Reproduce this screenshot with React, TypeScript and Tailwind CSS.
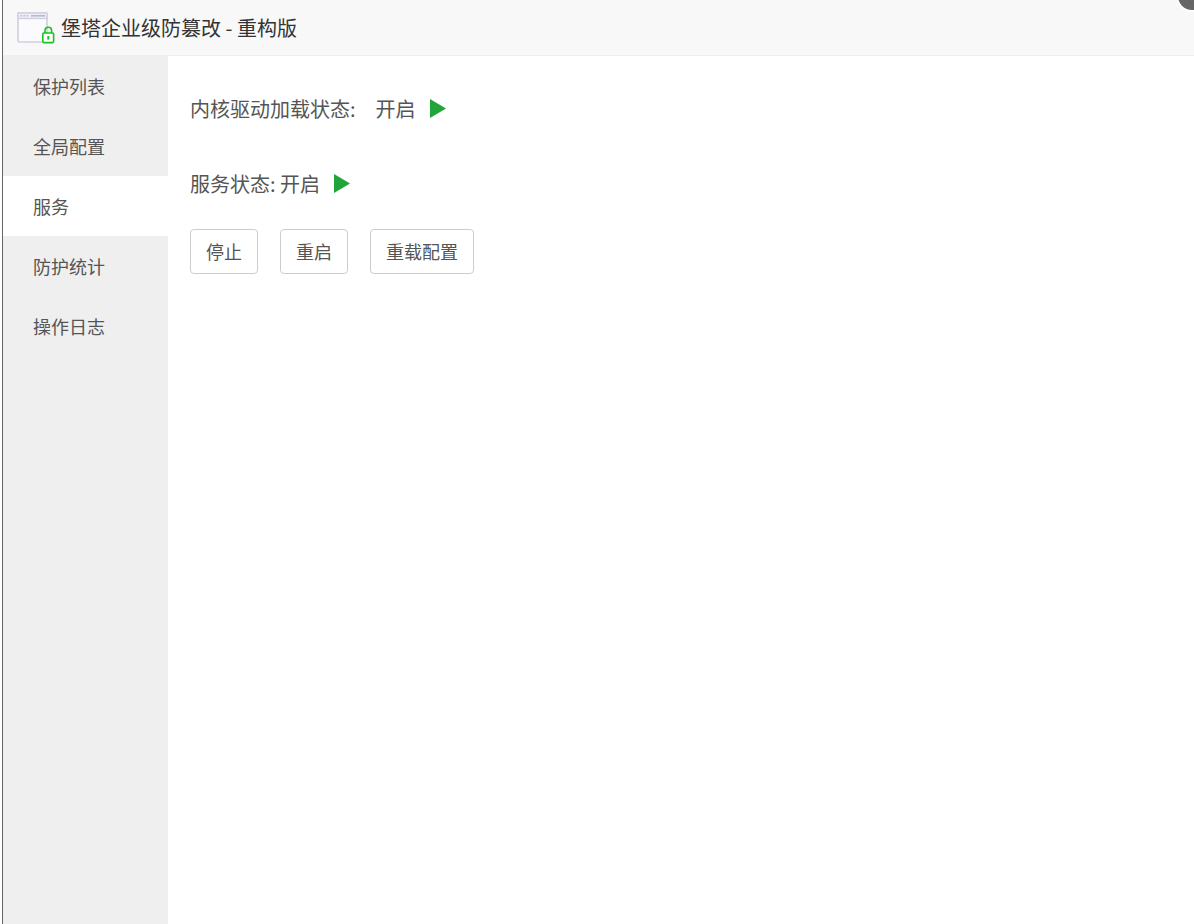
import React from "react";

const font = { fontFamily: '"Microsoft YaHei","Noto Sans CJK SC","Liberation Sans",sans-serif' };

const nav = ["保护列表", "全局配置", "服务", "防护统计", "操作日志"];

function Logo() {
  return (
    <svg width="38" height="32" viewBox="0 0 38 32" fill="none" className="shrink-0">
      <rect x="1" y="1" width="29" height="29" rx="2" fill="#fbfbfd" stroke="#cfcfe0" strokeWidth="1.6" />
      <rect x="1" y="1" width="29" height="5.5" fill="#eeeef5" stroke="#cfcfe0" strokeWidth="1.4" />
      <rect x="3.5" y="3" width="1.5" height="1.5" fill="#b9b9ce" />
      <rect x="6.5" y="3" width="1.5" height="1.5" fill="#b9b9ce" />
      <rect x="9.5" y="3" width="1.5" height="1.5" fill="#b9b9ce" />
      <rect x="14" y="3" width="14" height="1.6" fill="#b9b9ce" />
      <path d="M28 21v-2.5a3.3 3.3 0 0 1 6.6 0V21" stroke="#17c41f" strokeWidth="1.6" />
      <rect x="25.8" y="21" width="10.8" height="9.6" rx="1" fill="#fff" stroke="#17c41f" strokeWidth="1.6" />
      <rect x="30.3" y="24" width="2" height="3.6" fill="#17c41f" />
    </svg>
  );
}

function Play() {
  return (
    <svg width="16" height="19" viewBox="0 0 16 19" className="shrink-0">
      <polygon points="0,0 16,9.5 0,19" fill="#20a53a" />
    </svg>
  );
}

export default function App() {
  return (
    <div className="relative flex h-[924px] w-[1194px] flex-col overflow-hidden bg-white pl-[2px] text-[#555]" style={font}>
      <div className="flex h-full flex-col border-l border-[#666]">
        <header className="flex h-[56px] shrink-0 items-center gap-[6px] border-b border-[#eee] bg-[#f8f8f8] pl-[14px]">
          <Logo />
          <span className="text-[20px] leading-none text-[#333]">堡塔企业级防篡改 - 重构版</span>
        </header>
        <div className="flex flex-1">
          <nav className="flex w-[165px] shrink-0 flex-col bg-[#efefef]">
            {nav.map((item) => (
              <div
                key={item}
                className={`flex h-[60px] items-center pl-[30px] text-[18px] text-[#555] ${item === "服务" ? "bg-white" : ""}`}
              >
                {item}
              </div>
            ))}
          </nav>
          <main className="flex-1 pl-[22px]">
            <div className="flex h-[30px] mt-[38px] items-center text-[20px] text-[#555]">
              <span>内核驱动加载状态:</span>
              <span className="ml-[20px]">开启</span>
              <span className="ml-[14px] -mt-[2px]"><Play /></span>
            </div>
            <div className="mt-[45px] flex h-[30px] items-center text-[20px] text-[#555]">
              <span>服务状态: 开启</span>
              <span className="ml-[14px] -mt-[2px]"><Play /></span>
            </div>
            <div className="mt-[30px] flex gap-[22px]">
              {["停止", "重启", "重载配置"].map((b) => (
                <button key={b} className="h-[45px] rounded-[4px] border border-[#ccc] bg-white px-[15px] text-[18px] text-[#555]">
                  {b}
                </button>
              ))}
            </div>
          </main>
        </div>
      </div>
      <div className="absolute -right-[14px] -top-[20px] h-[32px] w-[32px] rounded-full border-[2px] border-white bg-[#666]" />
    </div>
  );
}
